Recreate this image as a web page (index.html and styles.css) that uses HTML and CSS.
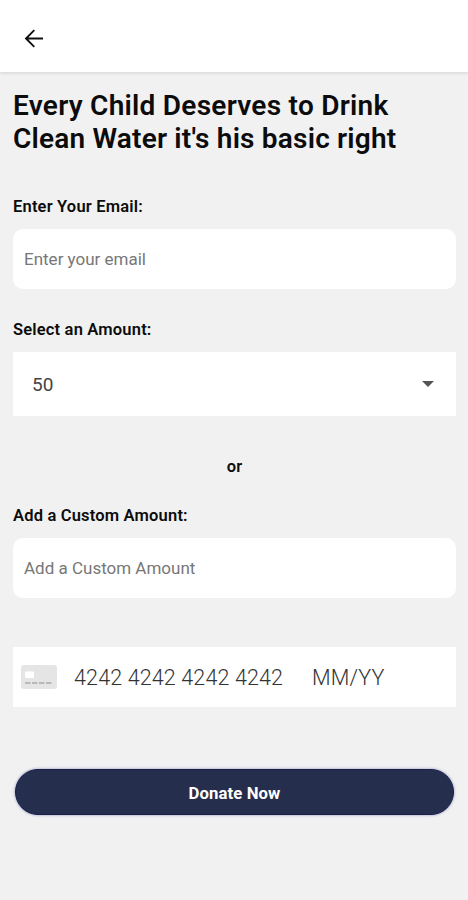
FILE: index.html
```html
<!DOCTYPE html>
<html lang="en">
<head>
<meta charset="utf-8">
<title>Donate</title>
<link rel="stylesheet" href="styles.css">
</head>
<body>
<header class="topbar">
  <svg class="back" viewBox="0 0 20 20" role="img" aria-label="Back"><path d="M19 9.5H2M10.3 1.2 2 9.5l8.3 8.3"/></svg>
</header>
<main class="form">
  <h1 class="title"><span class="title-a">Every Child Deserves to Drink</span><br><span class="title-b">Clean Water it's his basic right</span></h1>
  <div class="label label-email"><span>Enter Your Email:</span></div>
  <div class="input"><span>Enter your email</span></div>
  <div class="label label-amount"><span>Select an Amount:</span></div>
  <div class="select"><span>50</span><svg class="caret" viewBox="0 0 12 6"><path d="M0 0h12L6 6z"/></svg></div>
  <div class="or"><span>or</span></div>
  <div class="label label-custom"><span>Add a Custom Amount:</span></div>
  <div class="input"><span>Add a Custom Amount</span></div>
  <div class="card">
    <svg class="card-icon" viewBox="0 0 36 24"><rect width="36" height="24" rx="3" fill="#e5e5e5"/><rect x="4" y="6.5" width="9" height="6.5" rx="1" fill="#fff"/><path d="M4 18h5.500m1.500 0h5.500m1.500 0h5.500m1.500 0h5.500" stroke="#aaa" stroke-width="1.3"/></svg>
    <span class="number">4242 4242 4242 4242</span><span class="expiry">MM/YY</span>
  </div>
  <button class="donate"><span>Donate Now</span></button>
</main>
</body>
</html>
```
FILE: styles.css
```css
* { box-sizing: border-box; }
body { margin: 0; min-height: 900px; background: #f1f1f1; color: #0c0c0c; font-family: Roboto, sans-serif; }
.topbar { height: 72px; padding: 29px 0 0 24px; background: #fff; box-shadow: 0 2px 2px #dedede; }
.back { display: block; width: 20px; height: 20px; fill: none; stroke: #111; stroke-width: 1.9; }
.form { padding: 17px 12px 0 13px; }
.title { margin: 0; height: 66px; font-size: 28px; font-weight: 600; line-height: 33px; letter-spacing: .2px; white-space: nowrap; }
.title-a { letter-spacing: .26px; }
.label { height: 20px; font-size: 16.500px; font-weight: 600; line-height: 20px; letter-spacing: .18px; }
.label-email { margin-top: 42px; }
.input { display: flex; align-items: center; height: 60px; margin-top: 12px; padding-left: 11px; background: #fff; border-radius: 10px; color: #777; font-size: 17px; font-weight: 400; }
.label-amount { margin-top: 31px; }
.select { display: flex; align-items: center; justify-content: space-between; height: 64px; margin-top: 12px; padding: 0 22px 0 19px; background: #fff; font-size: 19px; color: #444; }
.caret { width: 12px; height: 6px; fill: #555; }
.or { margin-top: 41px; height: 20px; text-align: center; font-size: 16.500px; font-weight: 600; line-height: 20px; }
.label-custom { margin-top: 29px; }
.card { display: flex; align-items: center; height: 60px; margin-top: 49px; padding-left: 8px; background: #fff; color: #333; font-size: 21.500px; font-weight: 300; white-space: nowrap; }
.card-icon { width: 36px; height: 24px; }
.number, .expiry { padding-top: 1px; }
.number { margin-left: 17px; width: 238px; letter-spacing: .14px; }
.expiry { letter-spacing: .2px; }
.donate { display: block; width: 439px; height: 46px; margin: 62px 0 0 2px; padding: 2px 0 0; border: 1px solid #17204a; border-radius: 23px; background: #262e4d; color: #fff; font: 700 16.700px Roboto, sans-serif; letter-spacing: .1px; box-shadow: 0 0 3px #8a8fb5; }
```
